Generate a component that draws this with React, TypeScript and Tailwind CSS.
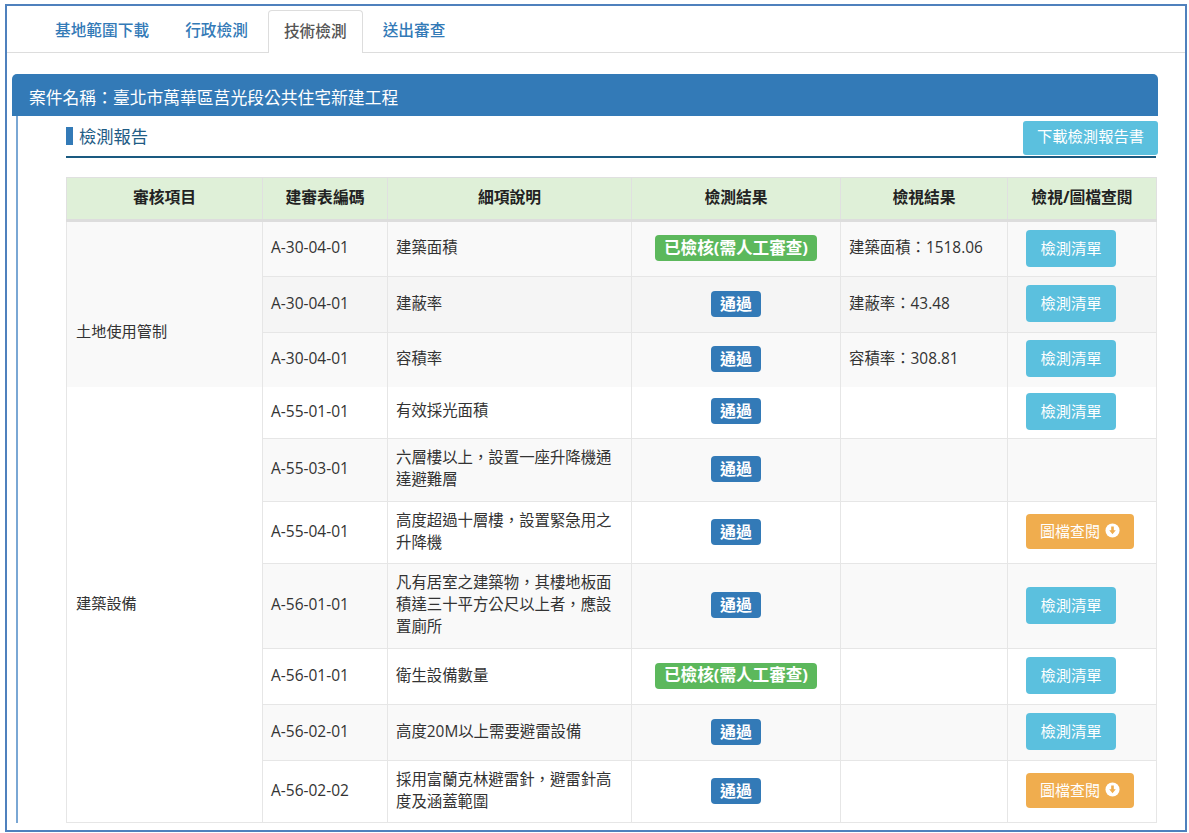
import React from 'react';

const FONT = "font-['Open_Sans','Noto_Sans_CJK_TC',sans-serif]";

type Row = {
  code: string;
  desc: string;
  result: 'manual' | 'pass';
  view?: string;
  action?: 'list' | 'file';
  h: string;
  bg: string;
  edge?: string;
};

const rowsA: Row[] = [
  { code: 'A-30-04-01', desc: '建築面積', result: 'manual', view: '建築面積：1518.06', action: 'list', h: 'h-[56px]', bg: 'bg-[#f9f9f9]' },
  { code: 'A-30-04-01', desc: '建蔽率', result: 'pass', view: '建蔽率：43.48', action: 'list', h: 'h-[56px]', bg: 'bg-[#f5f5f5]' },
  { code: 'A-30-04-01', desc: '容積率', result: 'pass', view: '容積率：308.81', action: 'list', h: 'h-[54px]', bg: 'bg-[#f9f9f9]', edge: 'border-b-0' },
];

const rowsB: Row[] = [
  { code: 'A-55-01-01', desc: '有效採光面積', result: 'pass', action: 'list', h: 'h-[52px]', bg: 'bg-white', edge: 'border-t-0' },
  { code: 'A-55-03-01', desc: '六層樓以上，設置一座升降機通達避難層', result: 'pass', h: 'h-[63px]', bg: 'bg-[#f9f9f9]' },
  { code: 'A-55-04-01', desc: '高度超過十層樓，設置緊急用之升降機', result: 'pass', action: 'file', h: 'h-[62px]', bg: 'bg-white' },
  { code: 'A-56-01-01', desc: '凡有居室之建築物，其樓地板面積達三十平方公尺以上者，應設置廁所', result: 'pass', action: 'list', h: 'h-[85px]', bg: 'bg-[#f9f9f9]' },
  { code: 'A-56-01-01', desc: '衛生設備數量', result: 'manual', action: 'list', h: 'h-[56px]', bg: 'bg-white' },
  { code: 'A-56-02-01', desc: '高度20M以上需要避雷設備', result: 'pass', action: 'list', h: 'h-[56px]', bg: 'bg-[#f9f9f9]' },
  { code: 'A-56-02-02', desc: '採用富蘭克林避雷針，避雷針高度及涵蓋範圍', result: 'pass', action: 'file', h: 'h-[62px]', bg: 'bg-white' },
];

const cell = 'border border-[#e6e6e6] align-middle pb-[2px]';

const ArrowCircle = () => (
  <svg viewBox="0 0 16 16" className="w-[15px] h-[15px] ml-[5px] -mt-[3px]">
    <circle cx="8" cy="8" r="7.5" fill="#ffffff" />
    <path d="M6.6 3.8h2.8v4h2.1L8 12 4.5 7.8h2.1z" fill="#f0ad4e" />
  </svg>
);

const Badge = ({ kind }: { kind: 'manual' | 'pass' }) =>
  kind === 'manual' ? (
    <span className="inline-flex items-center justify-center w-[162px] h-[26px] rounded-[4px] bg-[#5cb85c] text-white text-[16.6px] font-bold">
      已檢核(需人工審查)
    </span>
  ) : (
    <span className="inline-flex items-center justify-center w-[50px] h-[26px] rounded-[4px] bg-[#337ab7] text-white text-[16px] font-bold">
      通過
    </span>
  );

const Action = ({ kind }: { kind?: 'list' | 'file' }) => {
  if (kind === 'list')
    return (
      <span className="inline-flex items-center justify-center w-[90px] h-[37px] rounded-[4px] bg-[#5bc0de] text-white text-[15.3px]">
        檢測清單
      </span>
    );
  if (kind === 'file')
    return (
      <span className="inline-flex items-center justify-center w-[108px] h-[35px] rounded-[4px] bg-[#f0ad4e] text-white text-[15px]">
        圖檔查閱
        <ArrowCircle />
      </span>
    );
  return null;
};

const TableRow = ({ row, group, span, groupCls }: { row: Row; group?: string; span: number; groupCls: string }) => (
  <tr className={row.h}>
    {group && (
      <td rowSpan={span} className={`${cell} ${groupCls} px-[9px] text-[15.2px] text-[#333]`}>
        {group}
      </td>
    )}
    <td className={`${cell} ${row.edge ?? ''} ${row.bg} pl-[8px] text-[15.5px] text-[#333]`}>{row.code}</td>
    <td className={`${cell} ${row.edge ?? ''} ${row.bg} pl-[8px] pr-[16px] text-[15.4px] leading-[22px] text-[#333]`}>{row.desc}</td>
    <td className={`${cell} ${row.edge ?? ''} ${row.bg} text-center`}>
      <Badge kind={row.result} />
    </td>
    <td className={`${cell} ${row.edge ?? ''} ${row.bg} pl-[8px] text-[15.4px] text-[#333]`}>{row.view}</td>
    <td className={`${cell} ${row.edge ?? ''} ${row.bg} pl-[18px]`}>
      <Action kind={row.action} />
    </td>
  </tr>
);

const headers = ['審核項目', '建審表編碼', '細項說明', '檢測結果', '檢視結果', '檢視/圖檔查閱'];

export default function App() {
  return (
    <div className={`${FONT} w-[1189px] h-[833px] overflow-hidden bg-white pt-[4px] pl-[5px]`}>
      <div className="w-[1182px] h-[828px] border-2 border-[#4f81bd] overflow-hidden">
        <div className="flex items-end h-[47px] pl-[32px] border-b border-[#dddddd] text-[15.7px] font-medium text-[#337ab7]">
          <span className="flex items-center h-[42px] px-[16px] mr-[4px]">基地範圍下載</span>
          <span className="flex items-center h-[42px] px-[16px] mr-[4px]">行政檢測</span>
          <span className="flex items-center h-[43px] -mb-px px-[15px] mr-[5px] bg-white border border-b-0 border-[#dddddd] rounded-t-[4px] text-[#555555]">
            技術檢測
          </span>
          <span className="flex items-center h-[42px] px-[15px]">送出審查</span>
        </div>

        <div className="w-[1146px] ml-[5px] mt-[21px]">
          <div className="flex items-center h-[42px] pl-[17px] pt-[5px] bg-[#337ab7] rounded-t-[5px] text-white text-[16.8px]">
            案件名稱：臺北市萬華區莒光段公共住宅新建工程
          </div>

          <div className="ml-[4px] border-l-2 border-[#7aa7d4] h-[707px]">
            <div className="ml-[48px]">
              <div className="flex items-end justify-between h-[42px] w-[1090px] border-b-2 border-[#1a5a80]">
                <div className="flex items-center h-[18px] mb-[11px] pt-[2px] border-l-[7px] border-[#337ab7] pl-[6px] text-[17.3px] text-[#1f5c85]">
                  檢測報告
                </div>
                <span className="flex items-center justify-center w-[135px] h-[34px] -mr-[2px] mb-[1px] pb-[4px] rounded-[3px] bg-[#5bc0de] text-white text-[15.3px]">
                  下載檢測報告書
                </span>
              </div>

              <table className="mt-[19px] w-[1090px] table-fixed border-collapse">
                <colgroup>
                  <col className="w-[196px]" />
                  <col className="w-[125px]" />
                  <col className="w-[244px]" />
                  <col className="w-[209px]" />
                  <col className="w-[167px]" />
                  <col className="w-[149px]" />
                </colgroup>
                <thead>
                  <tr className="h-[43px] bg-[#dff0d8]">
                    {headers.map(h => (
                      <th key={h} className="border border-b-[3px] border-[#e0e0e0] border-b-[#dddddd] pb-[2px] text-center text-[15.8px] font-bold text-[#222]">
                        {h}
                      </th>
                    ))}
                  </tr>
                </thead>
                <tbody>
                  {rowsA.map((r, i) => (
                    <TableRow key={i} row={r} group={i === 0 ? '土地使用管制' : undefined} span={rowsA.length} groupCls="bg-[#f9f9f9] border-b-0 pt-[56px]" />
                  ))}
                  {rowsB.map((r, i) => (
                    <TableRow key={i} row={r} group={i === 0 ? '建築設備' : undefined} span={rowsB.length} groupCls="bg-white border-t-0" />
                  ))}
                </tbody>
              </table>
            </div>
          </div>
        </div>
      </div>
    </div>
  );
}
